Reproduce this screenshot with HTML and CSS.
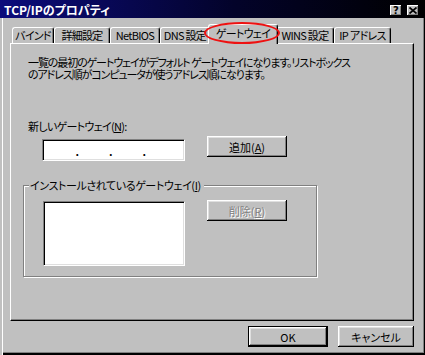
FILE: index.html
```html
<!DOCTYPE html>
<html lang="ja">
<head>
    <meta charset="UTF-8">
    <title>TCP/IPのプロパティ</title>
    <link rel="stylesheet" href="styles.css">
</head>
<body>
  <div class="window">
    <div class="titlebar">
      <span class="title">TCP/IPのプロパティ</span>
      <div class="title-btns">
        <span class="tbtn">?</span>
        <span class="tbtn"><svg width="8" height="7" viewBox="0 0 8 7"><path d="M0.5 0.5L7.5 6.5M7.5 0.5L0.5 6.5" stroke="#000" stroke-width="1.7"/></svg></span>
      </div>
    </div>

    <div class="content">
      <div class="tabs">
        <span class="tab">バインド</span>
        <span class="tab">詳細設定</span>
        <span class="tab">NetBIOS</span>
        <span class="tab">DNS 設定</span>
        <span class="tab active">ゲートウェイ<span class="mark"></span></span>
        <span class="tab">WINS 設定</span>
        <span class="tab">IP アドレス</span>
      </div>

      <div class="panel">
        <p class="desc">一覧の最初のゲートウェイがデフォルト ゲートウェイになります。リストボックス<br>のアドレス順がコンピュータが使うアドレス順になります。</p>

        <div class="label">新しいゲートウェイ(<u>N</u>):</div>
        <div class="row">
          <div class="ipbox">
            <span class="seg"></span><span class="dot">.</span>
            <span class="seg"></span><span class="dot">.</span>
            <span class="seg"></span><span class="dot">.</span>
            <span class="seg"></span>
          </div>
          <button class="btn">追加(<u>A</u>)</button>
        </div>

        <div class="group">
          <div class="group-label">インストールされているゲートウェイ(<u>I</u>)</div>
          <div class="row group-row">
            <div class="listbox"></div>
            <button class="btn" disabled>削除(<u>R</u>)</button>
          </div>
        </div>
      </div>

      <div class="footer">
        <button class="btn default">OK</button>
        <button class="btn cancel">キャンセル</button>
      </div>
    </div>
  </div>
</body>
</html>
```

FILE: styles.css
```css
*{
    margin:0;
    padding:0;
    box-sizing:border-box;
}
body{
    background:#c0c0c0;
    font-family:"Noto Sans CJK JP",sans-serif;
    font-size:11px;
    letter-spacing:-0.7px;
    color:#000;
    font-feature-settings:"palt";
}
.window{
    width:425px;
    height:355px;
    display:flex;
    flex-direction:column;
    box-shadow:inset 2px 0 #c0c0c0, inset 3px 0 #fff, inset -1px -2px #000, inset -2px -3px #808080;
}
.titlebar{
    height:18px;
    display:flex;
    align-items:center;
    justify-content:space-between;
    padding:2px 6px 0 4px;
    background:linear-gradient(to right,#0c0c7c,#03032a 55%,#000);
    color:#fff;
}
.title{
    font-weight:bold;
    font-size:12px;
    letter-spacing:0;
    line-height:12px;
}
.title-btns{
    display:flex;
    gap:5px;
}
.tbtn{
    width:12px;
    height:11px;
    display:flex;
    align-items:center;
    justify-content:center;
    background:#c0c0c0;
    color:#000;
    font:bold 10px/11px "DejaVu Sans",sans-serif;
    letter-spacing:0;
    box-shadow:inset -1px -1px #000, inset 1px 1px #fff, inset -2px -2px #808080;
}
.content{
    padding:0 11px 0 10px;
}
.tabs{
    display:flex;
    align-items:flex-end;
    height:19px;
    margin-top:6px;
    padding-left:2px;
}
.tab{
    height:16px;
    line-height:15px;
    text-align:center;
    white-space:nowrap;
    border:1px solid;
    border-color:#fff #000 transparent #fff;
    border-bottom:none;
    border-radius:3px 3px 0 0;
    box-shadow:inset -1px 0 #808080;
    background:#c0c0c0;
}
.tab:nth-child(1){ width:42px; }
.tab:nth-child(2){ width:56px; }
.tab:nth-child(3){ width:50px; }
.tab:nth-child(4){ width:50px; }
.tab:nth-child(5){ width:70px; }
.tab:nth-child(6){ width:58px; }
.tab:nth-child(7){ width:57px; }
.tab.active{
    position:relative;
    z-index:1;
    height:20px;
    margin:0 -2px -1px;
    line-height:16px;
}
.mark{
    position:absolute;
    left:-5px;
    top:-3px;
    width:76px;
    height:22px;
    border:2px solid #ee1111;
    border-radius:50%;
}
.panel{
    height:278px;
    border:1px solid;
    border-color:#fff #000 #000 #fff;
    box-shadow:inset -1px -1px #808080;
    padding-left:12px;
}
.desc{
    margin:13px 0 0 5px;
    line-height:11.5px;
    letter-spacing:-1.1px;
    white-space:nowrap;
}
.label{
    margin:40px 0 0 5px;
    line-height:12px;
}
.row{
    display:flex;
    align-items:flex-start;
    margin:4px 0 0 19px;
}
.ipbox{
    width:143px;
    height:22px;
    margin-top:3px;
    display:flex;
    align-items:flex-end;
    padding:0 8px 3px 2px;
    background:#fff;
    border:1px solid;
    border-color:#808080 #fff #fff #808080;
    box-shadow:inset 1px 1px #000, inset -1px -1px #dfdfdf;
}
.seg{
    flex:1;
}
.dot{
    line-height:12px;
    font-weight:bold;
}
.btn{
    width:80px;
    height:21px;
    margin-left:22px;
    border:none;
    background:#c0c0c0;
    font:inherit;
    line-height:12px;
    color:#000;
    box-shadow:inset -1px -1px #000, inset 1px 1px #fff, inset -2px -2px #808080, inset 2px 2px #dfdfdf;
}
.btn u{
    text-underline-offset:1px;
}
.btn:disabled{
    color:#808080;
    text-shadow:1px 1px #fff;
}
.group{
    width:294px;
    height:92px;
    margin-top:24px;
    border:1px solid #808080;
    box-shadow:inset 1px 1px #fff, 1px 1px #fff;
}
.group-label{
    width:fit-content;
    margin:-7px 0 0 5px;
    padding:0 3px 0 1px;
    line-height:12px;
    letter-spacing:-0.4px;
    background:#c0c0c0;
}
.group-row{
    margin:9px 0 0 19px;
}
.listbox{
    width:142px;
    height:65px;
    margin-top:1px;
    background:#fff;
    border:1px solid;
    border-color:#808080 #fff #fff #808080;
    box-shadow:inset 1px 1px #000, inset -1px -1px #dfdfdf;
}
.footer{
    display:flex;
    justify-content:flex-end;
    gap:10px;
    margin-top:5px;
}
.footer .btn{
    margin-left:0;
}
.btn.default{
    border:1px solid #000;
}
.btn.cancel{
    width:76px;
}
```
